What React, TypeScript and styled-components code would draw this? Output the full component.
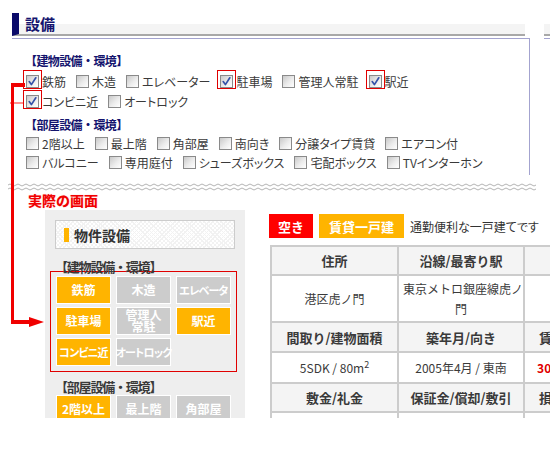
import React from 'react';
import styled, { createGlobalStyle, css } from 'styled-components';

const GlobalStyle = createGlobalStyle`
  body {
    margin: 0;
    background: #ffffff;
    font-family: 'Noto Sans CJK JP', 'Noto Sans', sans-serif;
    color: #333;
  }
`;

const Page = styled.div`
  position: relative;
  width: 550px;
  height: 450px;
  overflow: hidden;
  padding-top: 13px;
  box-sizing: border-box;
`;

/* ---------- top: settings form ---------- */

const HeadingRow = styled.div`
  display: flex;
  margin-left: 12px;
  height: 23px;
`;

const Heading = styled.h2`
  margin: 0;
  width: 513px;
  box-sizing: border-box;
  border-left: 7px solid #0a0a6a;
  border-bottom: 2px solid #a8a8a8;
  background: linear-gradient(to bottom, transparent 11px, #f4f4f4 11px);
  padding-left: 6px;
  font-size: 15px;
  line-height: 21px;
  font-weight: bold;
  color: #14146e;
`;

const HeadingStub = styled.div`
  flex: 1;
  margin-left: 19px;
  border-bottom: 2px solid #a8a8a8;
  background: linear-gradient(to bottom, transparent 11px, #f4f4f4 11px);
`;

const BoxRow = styled.div`
  display: flex;
  margin-top: 2px;
  margin-left: 12px;
`;

const FormBox = styled.div`
  width: 518px;
  height: 137px;
  box-sizing: border-box;
  border-top: 1px solid #a3a3cf;
  border-right: 1px solid #a3a3cf;
  padding: 13px 0 0 13px;
`;

const BoxStub = styled.div`
  flex: 1;
  margin-left: 14px;
  border-top: 1px solid #a3a3cf;
`;

const SectionLabel = styled.div<{ $gap?: number }>`
  height: 18px;
  line-height: 18px;
  margin-top: ${p => p.$gap ?? 0}px;
  font-size: 12px;
  font-weight: bold;
  letter-spacing: -0.6px;
  color: #14146e;
`;

const CheckRow = styled.div<{ $gap?: number }>`
  display: flex;
  align-items: center;
  gap: 10px;
  height: 19px;
  margin-top: ${p => p.$gap ?? 0}px;
  padding-left: 1px;
`;

const CheckItem = styled.label`
  display: flex;
  align-items: center;
  gap: 3px;
  font-size: 12px;
  color: #3a3a3a;
  white-space: nowrap;
  font-feature-settings: 'palt';
`;

const Box = styled.span<{ $mark?: boolean }>`
  position: relative;
  display: inline-flex;
  align-items: center;
  justify-content: center;
  width: 13px;
  height: 13px;
  box-sizing: border-box;
  border: 1px solid #8a8a8a;
  background: linear-gradient(135deg, #c9c9c9 0%, #ececec 55%, #ffffff 100%);
  ${p =>
    p.$mark &&
    css`
      &::after {
        content: '';
        position: absolute;
        top: -6px;
        left: -4px;
        right: -4px;
        bottom: -2px;
        border: 1px solid #e00000;
      }
    `}
`;

const Check = () => (
  <svg width="11" height="11" viewBox="0 0 11 11">
    <path d="M2.2 5.6 L4.4 8.6 L8.8 1.8" fill="none" stroke="#3552a8" strokeWidth="1.7" strokeLinecap="round" strokeLinejoin="round" />
  </svg>
);

type Opt = { label: string; on?: boolean; mark?: boolean };

const CheckGroup: React.FC<{ items: Opt[]; gap?: number }> = ({ items, gap }) => (
  <CheckRow $gap={gap}>
    {items.map(o => (
      <CheckItem key={o.label}>
        <Box $mark={o.mark}>{o.on && <Check />}</Box>
        {o.label}
      </CheckItem>
    ))}
  </CheckRow>
);

const WaveWrap = styled.div`
  margin-top: -2px;
  margin-left: 8px;
  height: 10px;
`;

const Wave = () => {
  const n = 66;
  const line = (y: number) => `M0 ${y} q2 -2 4 0` + ' t4 0'.repeat(n * 2);
  return (
    <svg width="528" height="10" viewBox="0 0 528 10">
      <rect width="528" height="10" fill="#fff" />
      <path d={line(3)} fill="none" stroke="#b4b4b4" strokeWidth="1" />
      <path d={line(7)} fill="none" stroke="#b4b4b4" strokeWidth="1" />
    </svg>
  );
};

const Caption = styled.div`
  margin: 9px 0 0 28px;
  height: 16px;
  line-height: 16px;
  font-size: 14px;
  font-weight: bold;
  color: #f00000;
  text-shadow: 0 0 1px #ff9a9a;
`;

/* ---------- bottom: actual screen ---------- */

const Mockup = styled.div`
  display: flex;
  margin: 2px 0 0 45px;
  height: 208px;
  overflow: hidden;
`;

const SidePanel = styled.div`
  width: 200px;
  flex-shrink: 0;
  box-sizing: border-box;
  background: #eeeeee;
  padding: 10px;
`;

const PanelHead = styled.div`
  display: flex;
  align-items: center;
  gap: 5px;
  height: 29px;
  box-sizing: border-box;
  border: 1px solid #cccccc;
  padding-left: 8px;
  background-color: #ffffff;
  background-image: repeating-linear-gradient(45deg, #f2f2f2 0 1px, transparent 1px 3px),
    repeating-linear-gradient(-45deg, #f2f2f2 0 1px, transparent 1px 3px);
  font-size: 14px;
  font-weight: bold;
  color: #333;
`;

const HeadBar = styled.span`
  width: 5px;
  height: 14px;
  background: #ffb400;
`;

const PanelLabel = styled.div<{ $gap: number }>`
  margin-top: ${p => p.$gap}px;
  height: 16px;
  line-height: 16px;
  font-size: 13px;
  font-weight: bold;
  letter-spacing: -1.2px;
  color: #3a3a3a;
`;

const Highlight = styled.div`
  margin: -4px 0 0 -5px;
  width: 187px;
  box-sizing: border-box;
  border: 1px solid #e00000;
  padding: 4px 5px 5px;
`;

const ButtonGrid = styled.div<{ $indent?: number }>`
  display: grid;
  grid-template-columns: repeat(3, 55px);
  grid-auto-rows: 28px;
  column-gap: 5px;
  row-gap: 3px;
  padding-left: ${p => p.$indent ?? 0}px;
`;

const FacilityButton = styled.div<{ $on?: boolean; $tight?: boolean }>`
  display: flex;
  align-items: center;
  justify-content: center;
  box-sizing: border-box;
  border: 1px solid #ffffff;
  background: ${p => (p.$on ? '#ffb400' : '#cccccc')};
  color: #ffffff;
  font-size: ${p => (p.$tight ? 11 : 12)}px;
  font-weight: bold;
  line-height: 12px;
  text-align: center;
  white-space: pre;
  font-feature-settings: 'palt';
  letter-spacing: ${p => (p.$tight ? -0.8 : 0)}px;
`;

const Detail = styled.div`
  margin-left: 24px;
  padding-top: 4px;
  flex-shrink: 0;
`;

const TagRow = styled.div`
  display: flex;
  align-items: center;
  gap: 6px;
  height: 24px;
`;

const Tag = styled.span<{ $color: string; $w: number }>`
  display: flex;
  align-items: center;
  justify-content: center;
  width: ${p => p.$w}px;
  height: 24px;
  background: ${p => p.$color};
  color: #fff;
  font-size: 13px;
  font-weight: bold;
`;

const Lead = styled.span`
  font-size: 12px;
  color: #333;
  white-space: nowrap;
  font-feature-settings: 'palt';
`;

const Table = styled.table`
  margin: 7px 0 0 1px;
  border-collapse: collapse;
  table-layout: fixed;
  width: 353px;
  border-left: 2px solid #cccccc;
`;

const Th = styled.th<{ $h: number }>`
  height: ${p => p.$h}px;
  padding: 0 4px;
  border: 2px solid #cccccc;
  background: #f4f4f4;
  font-size: 13px;
  font-weight: bold;
  color: #3a3a3a;
  white-space: nowrap;
  box-sizing: border-box;
`;

const Td = styled.td<{ $h: number; $price?: boolean }>`
  height: ${p => p.$h}px;
  padding: 0 4px;
  border: 2px solid #cccccc;
  text-align: center;
  font-size: 12px;
  line-height: 20px;
  color: ${p => (p.$price ? '#e00000' : '#3a3a3a')};
  font-weight: ${p => (p.$price ? 'bold' : 'normal')};
  white-space: nowrap;
  box-sizing: border-box;
  sup {
    font-size: 9px;
    line-height: 0;
  }
`;

/* ---------- annotation arrow ---------- */

const Annotation = styled.svg`
  position: absolute;
  left: 0;
  top: 0;
`;

const building: Opt[][] = [
  [
    { label: '鉄筋', on: true, mark: true },
    { label: '木造' },
    { label: 'エレベーター' },
    { label: '駐車場', on: true, mark: true },
    { label: '管理人常駐' },
    { label: '駅近', on: true, mark: true },
  ],
  [{ label: 'コンビニ近', on: true, mark: true }, { label: 'オートロック' }],
];

const room: Opt[][] = [
  [
    { label: '2階以上' },
    { label: '最上階' },
    { label: '角部屋' },
    { label: '南向き' },
    { label: '分譲タイプ賃貸' },
    { label: 'エアコン付' },
  ],
  [
    { label: 'バルコニー' },
    { label: '専用庭付' },
    { label: 'シューズボックス' },
    { label: '宅配ボックス' },
    { label: 'TVインターホン' },
  ],
];

const buildingButtons = [
  { label: '鉄筋', on: true },
  { label: '木造' },
  { label: 'エレベータ', tight: true },
  { label: '駐車場', on: true },
  { label: '管理人\n常駐' },
  { label: '駅近', on: true },
  { label: 'コンビニ近', on: true, tight: true },
  { label: 'オートロック', tight: true },
];

const roomButtons = [{ label: '2階以上', on: true }, { label: '最上階' }, { label: '角部屋' }];

export default function App() {
  return (
    <Page>
      <GlobalStyle />
      <HeadingRow>
        <Heading>設備</Heading>
        <HeadingStub />
      </HeadingRow>
      <BoxRow>
        <FormBox>
          <SectionLabel>【建物設備・環境】</SectionLabel>
          <CheckGroup items={building[0]} gap={2} />
          <CheckGroup items={building[1]} gap={1} />
          <SectionLabel $gap={5}>【部屋設備・環境】</SectionLabel>
          <CheckGroup items={room[0]} />
          <CheckGroup items={room[1]} />
        </FormBox>
        <BoxStub />
      </BoxRow>
      <WaveWrap>
        <Wave />
      </WaveWrap>
      <Caption>実際の画面</Caption>
      <Mockup>
        <SidePanel>
          <PanelHead>
            <HeadBar />
            物件設備
          </PanelHead>
          <PanelLabel $gap={10}>【建物設備・環境】</PanelLabel>
          <Highlight>
            <ButtonGrid>
              {buildingButtons.map(b => (
                <FacilityButton key={b.label} $on={b.on} $tight={b.tight}>
                  {b.label}
                </FacilityButton>
              ))}
            </ButtonGrid>
          </Highlight>
          <PanelLabel $gap={7}>【部屋設備・環境】</PanelLabel>
          <ButtonGrid $indent={1}>
            {roomButtons.map(b => (
              <FacilityButton key={b.label} $on={b.on}>
                {b.label}
              </FacilityButton>
            ))}
          </ButtonGrid>
        </SidePanel>
        <Detail>
          <TagRow>
            <Tag $color="#ff0000" $w={44}>空き</Tag>
            <Tag $color="#ffb400" $w={85}>賃貸一戸建</Tag>
            <Lead>通勤便利な一戸建てです</Lead>
          </TagRow>
          <Table>
            <colgroup>
              <col style={{ width: 127 }} />
              <col style={{ width: 126 }} />
              <col style={{ width: 100 }} />
            </colgroup>
            <tbody>
              <tr>
                <Th $h={29}>住所</Th>
                <Th $h={29}>沿線/最寄り駅</Th>
                <Th $h={29} />
              </tr>
              <tr>
                <Td $h={47}>港区虎ノ門</Td>
                <Td $h={47}>
                  東京メトロ銀座線虎ノ
                  <br />門
                </Td>
                <Td $h={47} />
              </tr>
              <tr>
                <Th $h={30}>間取り/建物面積</Th>
                <Th $h={30}>築年月/向き</Th>
                <Th $h={30}>賃料/管理費</Th>
              </tr>
              <tr>
                <Td $h={31}>
                  5SDK / 80m<sup>2</sup>
                </Td>
                <Td $h={31}>2005年4月 / 東南</Td>
                <Td $h={31} $price>
                  30万円/1万円
                </Td>
              </tr>
              <tr>
                <Th $h={29}>敷金/礼金</Th>
                <Th $h={29}>保証金/償却/敷引</Th>
                <Th $h={29}>損保/更新料</Th>
              </tr>
              <tr>
                <Td $h={30} />
                <Td $h={30} />
                <Td $h={30} />
              </tr>
            </tbody>
          </Table>
        </Detail>
      </Mockup>
      <Annotation width="50" height="340" viewBox="0 0 50 340">
        <rect x="11" y="83" width="14" height="4" fill="#f00000" />
        <rect x="10" y="102" width="13" height="2" fill="#ff9090" />
        <rect x="11" y="83" width="3" height="241" fill="#f00000" />
        <rect x="11" y="320" width="20" height="4" fill="#f00000" />
        <polygon points="29,317 44,322 29,327" fill="#f00000" />
      </Annotation>
    </Page>
  );
}
